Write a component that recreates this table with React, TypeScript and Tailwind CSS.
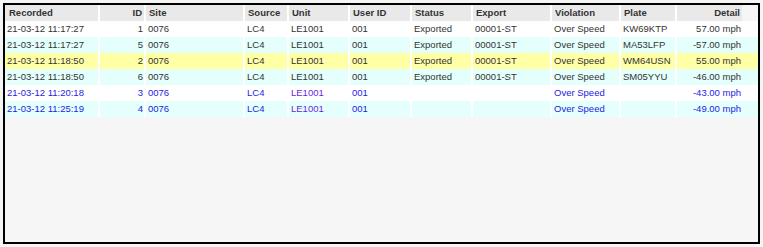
import React from 'react';

type Row = {
    recorded: string;
    id: number;
    site: string;
    source: string;
    unit: string;
    user: string;
    status: string;
    exportId: string;
    violation: string;
    plate: string;
    detail: string;
    bg: 'white' | 'cyan' | 'yellow';
    pending?: boolean;
};

const rows: Row[] = [
    { recorded: '21-03-12 11:17:27', id: 1, site: '0076', source: 'LC4', unit: 'LE1001', user: '001', status: 'Exported', exportId: '00001-ST', violation: 'Over Speed', plate: 'KW69KTP', detail: '57.00 mph', bg: 'white' },
    { recorded: '21-03-12 11:17:27', id: 5, site: '0076', source: 'LC4', unit: 'LE1001', user: '001', status: 'Exported', exportId: '00001-ST', violation: 'Over Speed', plate: 'MA53LFP', detail: '-57.00 mph', bg: 'cyan' },
    { recorded: '21-03-12 11:18:50', id: 2, site: '0076', source: 'LC4', unit: 'LE1001', user: '001', status: 'Exported', exportId: '00001-ST', violation: 'Over Speed', plate: 'WM64USN', detail: '55.00 mph', bg: 'yellow' },
    { recorded: '21-03-12 11:18:50', id: 6, site: '0076', source: 'LC4', unit: 'LE1001', user: '001', status: 'Exported', exportId: '00001-ST', violation: 'Over Speed', plate: 'SM05YYU', detail: '-46.00 mph', bg: 'cyan' },
    { recorded: '21-03-12 11:20:18', id: 3, site: '0076', source: 'LC4', unit: 'LE1001', user: '001', status: '', exportId: '', violation: 'Over Speed', plate: '', detail: '-43.00 mph', bg: 'white', pending: true },
    { recorded: '21-03-12 11:25:19', id: 4, site: '0076', source: 'LC4', unit: 'LE1001', user: '001', status: '', exportId: '', violation: 'Over Speed', plate: '', detail: '-49.00 mph', bg: 'cyan', pending: true },
];

const grid = 'grid grid-cols-[93px_46px_99px_44px_61px_62px_61px_79px_69px_56px_67px]';

const rowBg = {
    white: 'bg-white',
    cyan: 'bg-[#e5fffc]',
    yellow: 'bg-[#ffffa6]',
};

const Th: React.FC<{ children: React.ReactNode; right?: boolean; first?: boolean }> = ({ children, right, first }) => (
    <div
        className={`h-4 leading-4 bg-[#e9e9e9] font-bold whitespace-nowrap overflow-hidden ${first ? 'pl-[4px]' : 'border-l-2 border-white pl-[3px]'} ${right ? 'text-right pr-[2px]' : ''}`}
    >
        {children}
    </div>
);

const Td: React.FC<{ children?: React.ReactNode; right?: boolean; first?: boolean; className?: string }> = ({ children, right, first, className = '' }) => (
    <div
        className={`h-4 leading-4 whitespace-nowrap overflow-hidden ${first ? 'pl-[2px]' : 'border-l-2 border-white pl-[2px]'} ${right ? 'text-right pr-[1px]' : ''} ${className}`}
    >
        {children}
    </div>
);

export default function App() {
    return (
        <div className="w-[763px] h-[247px] bg-[#f5f5f5] p-[3px] font-['Liberation_Sans',Arial,sans-serif] text-[9.5px]">
            <div className="w-[757px] h-[241px] border-2 border-black bg-[#f6f6f6]">
                <div className={`${grid} text-[#333]`}>
                    <Th first>Recorded</Th>
                    <Th right>ID</Th>
                    <Th>Site</Th>
                    <Th>Source</Th>
                    <Th>Unit</Th>
                    <Th>User ID</Th>
                    <Th>Status</Th>
                    <Th>Export</Th>
                    <Th>Violation</Th>
                    <Th>Plate</Th>
                    <Th right>Detail</Th>
                </div>
                {rows.map((r) => (
                    <div
                        key={r.id}
                        className={`${grid} ${rowBg[r.bg]} ${r.pending ? 'text-[#2323e6]' : 'text-[#333]'}`}
                    >
                        <Td first>{r.recorded}</Td>
                        <Td right>{r.id}</Td>
                        <Td>{r.site}</Td>
                        <Td>{r.source}</Td>
                        <Td className={r.pending ? 'text-[#6a1fe6]' : ''}>{r.unit}</Td>
                        <Td>{r.user}</Td>
                        <Td>{r.status}</Td>
                        <Td>{r.exportId}</Td>
                        <Td>{r.violation}</Td>
                        <Td>{r.plate}</Td>
                        <Td right>{r.detail}</Td>
                    </div>
                ))}
            </div>
        </div>
    );
}
